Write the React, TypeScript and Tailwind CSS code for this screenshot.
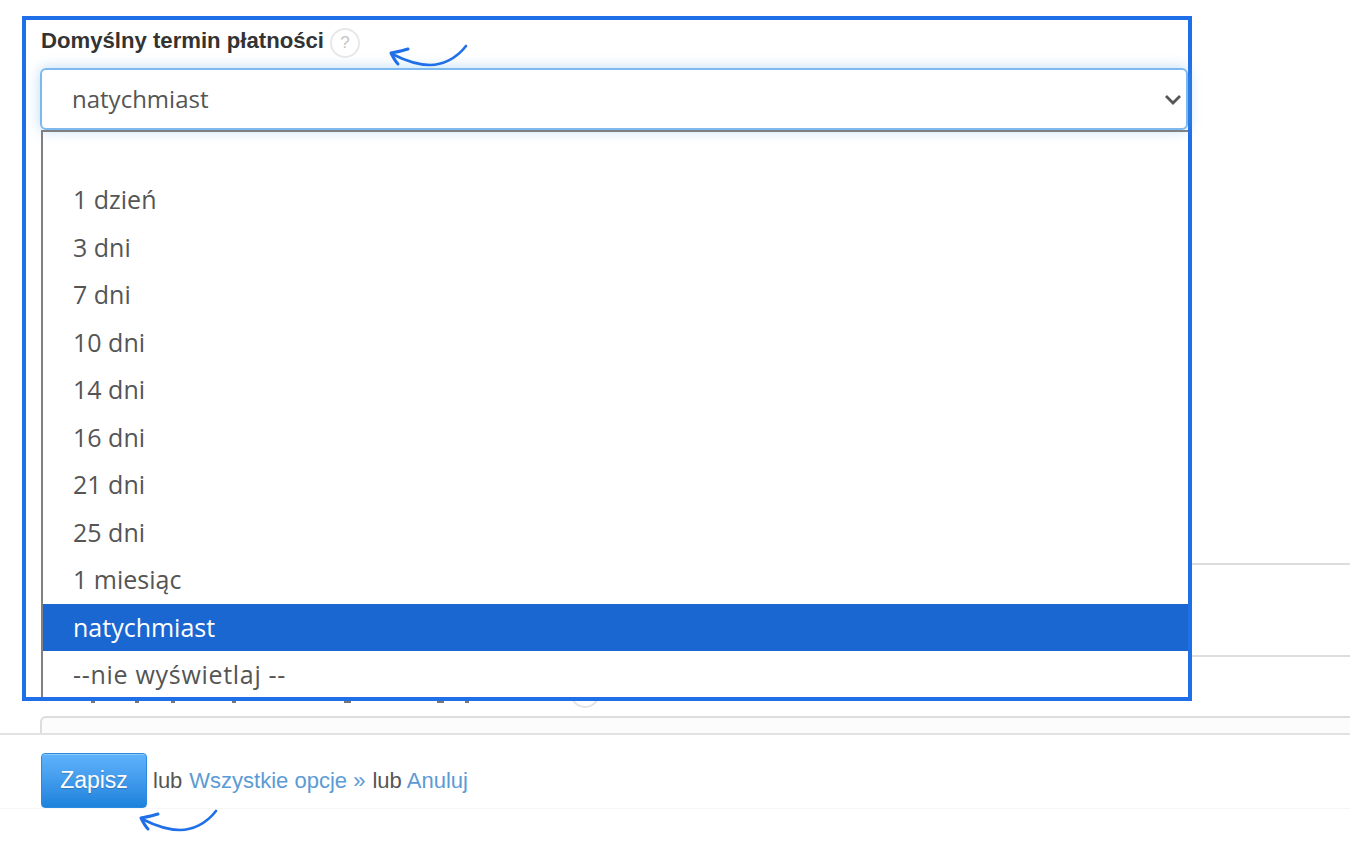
const options = ["", "1 dzień", "3 dni", "7 dni", "10 dni", "14 dni", "16 dni", "21 dni", "25 dni", "1 miesiąc", "natychmiast", "--nie wyświetlaj --"];

function Arrow({ className }: { className: string }) {
  return (
    <svg className={className} viewBox="0 0 80 26" fill="none" stroke="#1f6fe8" strokeLinecap="round" strokeLinejoin="round">
      <path d="M78 4 C68 17 54 23 42 23 C30 23 16 18 4 12" strokeWidth="2.6" />
      <path d="M20 7 C14 9 8 10 3 11 C5 15 7 19 10 22" strokeWidth="3" />
    </svg>
  );
}

export default function App() {
  return (
    <div className="relative h-[847px] w-[1350px] overflow-hidden bg-white font-['Liberation_Sans',sans-serif] text-[#333]">
      {/* page behind the dropdown */}
      <div className="flex h-[733px] flex-col overflow-hidden">
        <div className="h-[563px] shrink-0" />
        <div className="ml-[41px] h-[92px] shrink-0 border-t-2 border-[#ddd]" />
        <div className="ml-[41px] h-[61px] shrink-0 border-t-2 border-[#ddd] pt-[21px]">
          {/* what is left of the label hidden by the box: descenders and help icon */}
          <div className="flex h-[30px] items-start">
            <span className="mt-[23px] ml-[50px] h-[2px] w-[4px] bg-[#777]" />
            <span className="mt-[23px] ml-[40px] h-[2px] w-[4px] bg-[#777]" />
            <span className="mt-[23px] ml-[32px] h-[2px] w-[4px] bg-[#777]" />
            <span className="mt-[23px] ml-[57px] h-[2px] w-[4px] bg-[#777]" />
            <span className="mt-[23px] ml-[108px] h-[2px] w-[7px] bg-[#777]" />
            <span className="mt-[23px] ml-[86px] h-[2px] w-[7px] bg-[#777]" />
            <span className="mt-[23px] ml-[21px] h-[2px] w-[4px] bg-[#777]" />
            <span className="ml-[101px] h-[30px] w-[30px] rounded-full border-2 border-[#e4e4e4]" />
          </div>
        </div>
        <div className="mr-[-10px] ml-[40px] h-[30px] shrink-0 rounded-t-md border-2 border-[#ddd] bg-[#fcfcfc]" />
      </div>

      {/* sticky footer */}
      <div className="h-[76px] border-t-2 border-b border-t-[#e2e2e2] border-b-[#f6f6f6] bg-white pt-[18px] pl-[41px] text-[22px]">
        <div className="flex items-center">
          <button className="mr-[6px] flex h-[55px] w-[106px] items-center justify-center rounded-[4px] border border-[#2a8ae0] bg-gradient-to-b from-[#5fb3fc] to-[#1c82dc] text-[23px] text-white shadow-[inset_0_1px_0_rgba(255,255,255,0.3)] [text-shadow:0_1px_1px_rgba(0,0,0,0.2)]">
            Zapisz
          </button>
          <span className="text-[#555]">lub</span>
          <a className="ml-[7px] text-[#5b9bd5]">Wszystkie opcje »</a>
          <span className="ml-[7px] text-[#555]">lub</span>
          <a className="ml-[5px] text-[#5b9bd5]">Anuluj</a>
        </div>
      </div>

      {/* highlighted annotation box */}
      <div className="absolute top-[16px] left-[22px] flex h-[685px] w-[1170px] flex-col border-4 border-[#1f6fe8] bg-white pt-[8px] pl-[15px]">
        <div className="flex h-[30px] shrink-0 items-center gap-[6px] text-[22.15px] font-bold text-[#333]">
          <span className="-translate-y-[2px]">Domyślny termin płatności</span>
          <span className="flex h-[30px] w-[30px] items-center justify-center rounded-full border-2 border-[#e8e8e8] text-[17px] font-normal text-[#c4c4c4]">?</span>
        </div>
        <div className="mt-[10px] -ml-[1px] flex h-[62px] w-[1148px] shrink-0 items-center justify-between rounded-[6px] border-2 border-[#7db8ee] pr-[4px] pl-[30px] font-['Open_Sans',sans-serif] text-[24px] text-[#555] shadow-[0_0_14px_rgba(102,175,233,0.45)]">
          natychmiast
          <svg className="h-[16px] w-[18px]" viewBox="0 0 18 16" fill="none" stroke="#555" strokeWidth="2.8">
            <path d="M2 5 L9 12 L16 5" />
          </svg>
        </div>
        <div className="w-[1147px] flex-1 overflow-hidden border-t-2 border-l-2 border-[#808080] font-['Open_Sans',sans-serif] text-[25px] text-[#555]">
          {options.map((o, i) => (
            <div
              key={i}
              className={
                o === "natychmiast"
                  ? "flex h-[47.5px] items-center bg-[#1a67d2] pl-[30px] text-white"
                  : o === ""
                    ? "h-[44px]"
                    : o.startsWith("--")
                      ? "flex h-[47.5px] items-center pl-[30px] tracking-[0.7px]"
                      : "flex h-[47.5px] items-center pl-[30px]"
              }
            >
              {o}
            </div>
          ))}
        </div>
      </div>

      {/* hand drawn arrows */}
      <Arrow className="absolute top-[42px] left-[388px] h-[26px] w-[80px]" />
      <Arrow className="absolute top-[807px] left-[138px] h-[26px] w-[80px]" />
    </div>
  );
}
